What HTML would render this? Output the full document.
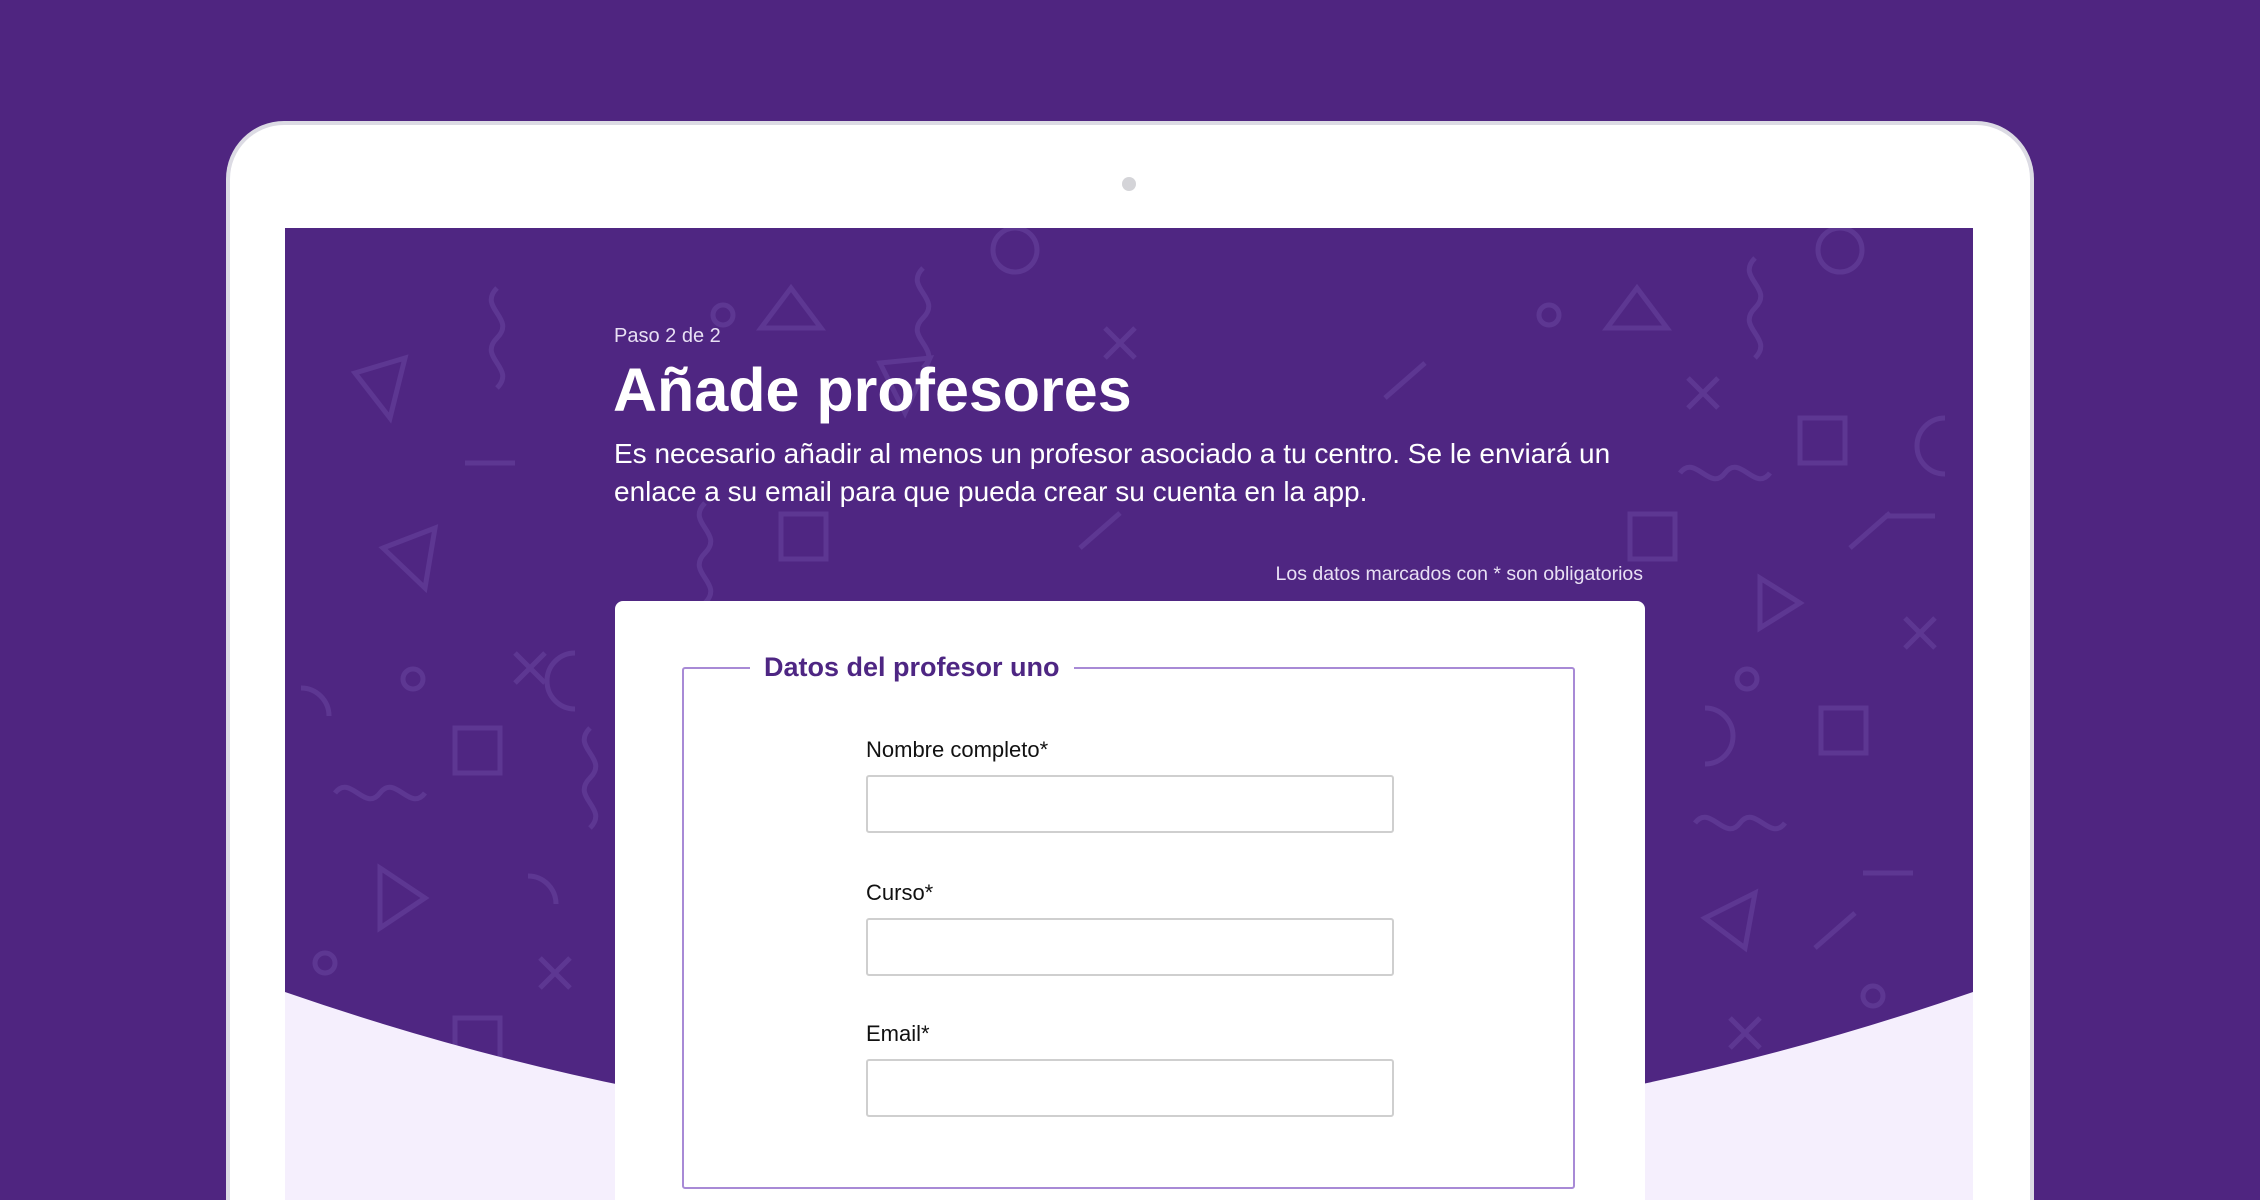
<!DOCTYPE html>
<html><head><meta charset="utf-8"><style>
*{margin:0;padding:0;box-sizing:border-box}
html,body{width:2260px;height:1200px;overflow:hidden;background:#4f2580;font-family:"Liberation Sans",sans-serif}
.wrap{position:absolute;left:0;top:0;width:2260px;height:1200px;overflow:hidden}
.frame{position:absolute;left:226px;top:121px;width:1808px;height:1079px;background:#fff;border:4px solid #dcdbe4;border-bottom:none;border-radius:58px 58px 0 0}
.cam{position:absolute;left:1122px;top:177px;width:14px;height:14px;border-radius:50%;background:#d4d4d8}
.screen{position:absolute;left:285px;top:228px;width:1688px;height:972px;background:#4f2682;overflow:hidden}
.t{position:absolute;color:#fff}
.card{position:absolute;left:615px;top:601px;width:1030px;height:599px;background:#fff;border-radius:8px 8px 0 0}
.fs{position:absolute;left:682px;top:667px;width:893px;height:522px;border:2px solid #a88ad6;border-radius:3px}
.legend{position:absolute;left:750px;top:648px;padding:0 14px;background:#fff;color:#4e2683;font-size:27px;font-weight:bold;line-height:38px}
.lbl{position:absolute;left:866px;font-size:22px;color:#111}
.inp{position:absolute;left:866px;width:528px;height:58px;border:2px solid #cfcfcf;border-radius:3px;background:#fff}
</style></head><body><div class="wrap">
<div class="frame"></div>
<div class="cam"></div>
<div class="screen">
<svg width="1688" height="972" style="position:absolute;left:0;top:0" fill="none" stroke="#6a45a0" stroke-width="5" opacity="0.55">
<polygon points="506,60 536,100 476,100"/><polygon points="1352,60 1382,100 1322,100"/>
<polygon points="70,145 120,130 105,190"/><polygon points="595,135 645,130 620,185"/>
<polygon points="98,320 150,300 140,360"/><polygon points="1475,350 1475,400 1515,375"/>
<polygon points="95,640 95,700 140,670"/><polygon points="1420,690 1470,665 1460,720"/>
<circle cx="730" cy="22" r="22"/><circle cx="1555" cy="22" r="22"/><circle cx="438" cy="87" r="10"/><circle cx="1264" cy="87" r="10"/>
<circle cx="128" cy="451" r="10"/><circle cx="1462" cy="451" r="10"/><circle cx="40" cy="735" r="10"/><circle cx="1588" cy="768" r="10"/>
<rect x="1515" y="190" width="45" height="45"/><rect x="496" y="286" width="45" height="45"/><rect x="170" y="500" width="45" height="45"/><rect x="1536" y="480" width="45" height="45"/><rect x="1345" y="286" width="45" height="45"/><rect x="170" y="790" width="45" height="45"/>
<path d="M820,100l30,30M850,100l-30,30M1403,150l30,30M1433,150l-30,30M230,425l30,30M260,425l-30,30M1620,390l30,30M1650,390l-30,30M255,730l30,30M285,730l-30,30M1445,790l30,30M1475,790l-30,30"/>
<path d="M1140,135l-40,35M835,285l-40,35M1605,285l-40,35M1570,685l-40,35M180,235h50M1600,288h50M1578,645h50"/>
<path d="M212,60c-20,20 20,30 0,50c-20,20 20,30 0,50M638,40c-20,20 20,30 0,50c-20,20 20,30 0,50M1470,30c-20,20 20,30 0,50c-20,20 20,30 0,50M305,500c-20,20 20,30 0,50c-20,20 20,30 0,50M420,275c-20,20 20,30 0,50c-20,20 20,30 0,50"/>
<path d="M290,425a28,28 0 0,0 0,56M1660,190a28,28 0 0,0 0,56M1420,480a28,28 0 0,1 0,56M16,460a28,28 0 0,1 28,28M243,648a28,28 0 0,1 28,28"/>
<path d="M1395,245c15,-20 30,20 45,0c15,-20 30,20 45,0M1410,595c15,-20 30,20 45,0c15,-20 30,20 45,0M50,565c15,-20 30,20 45,0c15,-20 30,20 45,0"/>
</svg>
<svg width="1688" height="972" style="position:absolute;left:0;top:0"><path d="M0,764 Q844,1056 1688,764 L1688,972 L0,972Z" fill="#f5effd"/></svg>
</div>
<div class="t" style="left:614px;top:325px;font-size:20px;color:#e8e0f4">Paso 2 de 2</div>
<div class="t" style="left:613px;top:352px;font-size:61px;font-weight:bold;line-height:76px">Añade profesores</div>
<div class="t" style="left:614px;top:435px;font-size:28px;line-height:37.5px;width:1150px">Es necesario añadir al menos un profesor asociado a tu centro. Se le enviará un<br>enlace a su email para que pueda crear su cuenta en la app.</div>
<div class="t" style="left:1100px;width:543px;text-align:right;top:563px;font-size:19.5px;color:#e8e0f4">Los datos marcados con * son obligatorios</div>
<div class="card"></div>
<div class="fs"></div>
<div class="legend">Datos del profesor uno</div>
<div class="lbl" style="top:737px">Nombre completo*</div>
<div class="inp" style="top:775px"></div>
<div class="lbl" style="top:880px">Curso*</div>
<div class="inp" style="top:918px"></div>
<div class="lbl" style="top:1021px">Email*</div>
<div class="inp" style="top:1059px"></div>
</div></body></html>
